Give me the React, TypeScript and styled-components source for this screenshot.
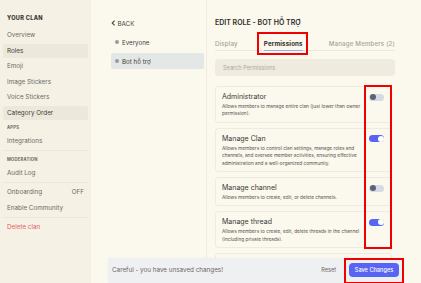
import styled, { createGlobalStyle } from 'styled-components'

const GlobalStyle = createGlobalStyle`
    html, body {
        margin: 0;
        padding: 0;
        background: #fbf8ee;
    }
    body {
        font-family: Inter, "Noto Sans", "Liberation Sans", sans-serif;
        -webkit-font-smoothing: antialiased;
    }
`

type Permission = {
    title: string
    desc: string
    on: boolean
}

const permissions: Permission[] = [
    {
        title: 'Administrator',
        desc: 'Allows members to manage entire clan (just lower than owner permission).',
        on: false,
    },
    {
        title: 'Manage Clan',
        desc: 'Allows members to control clan settings, manage roles and channels, and oversee member activities, ensuring effective administration and a well-organized community.',
        on: true,
    },
    {
        title: 'Manage channel',
        desc: 'Allows members to create, edit, or delete channels.',
        on: false,
    },
    {
        title: 'Manage thread',
        desc: 'Allows members to create, edit, delete threads in the channel (including private threads).',
        on: true,
    },
]

function App() {
    return (
        <>
            <GlobalStyle />
            <Page>
                <Sidebar>
                    <SectionLabel>YOUR CLAN</SectionLabel>
                    <NavItem>Overview</NavItem>
                    <NavItem active>Roles</NavItem>
                    <NavItem>Emoji</NavItem>
                    <NavItem>Image Stickers</NavItem>
                    <NavItem>Voice Stickers</NavItem>
                    <NavItem active>Category Order</NavItem>
                    <SmallLabel>APPS</SmallLabel>
                    <NavItem>Integrations</NavItem>
                    <Divider />
                    <SmallLabel>MODERATION</SmallLabel>
                    <NavItem>Audit Log</NavItem>
                    <Divider />
                    <NavItem>
                        Onboarding
                        <NavStatus>OFF</NavStatus>
                    </NavItem>
                    <NavItem>Enable Community</NavItem>
                    <Divider />
                    <NavItem danger>Delete clan</NavItem>
                </Sidebar>

                <RoleColumn>
                    <BackLink>
                        <svg width="5" height="6" viewBox="0 0 5 6">
                            <path d="M3.6 0.6 L1.2 3 L3.6 5.4" fill="none" stroke="#4a4743" strokeWidth="1.1" />
                        </svg>
                        BACK
                    </BackLink>
                    <RoleList>
                        <RoleItem>
                            <RoleDot />
                            Everyone
                        </RoleItem>
                        <RoleItem active>
                            <RoleDot />
                            Bot hỗ trợ
                        </RoleItem>
                    </RoleList>
                </RoleColumn>

                <EditColumn>
                    <EditTitle>EDIT ROLE - BOT HỖ TRỢ</EditTitle>
                    <TabBar>
                        <Tab>Display</Tab>
                        <Tab active marked>Permissions</Tab>
                        <Tab>Manage Members (2)</Tab>
                    </TabBar>
                    <SearchBox>Search Permissions</SearchBox>
                    <CardList>
                        <ToggleMark />
                        {permissions.map((p) => (
                            <PermissionCard key={p.title}>
                                <CardText>
                                    <CardTitle>{p.title}</CardTitle>
                                    <CardDesc>{p.desc}</CardDesc>
                                </CardText>
                                <Toggle on={p.on}>
                                    <Knob on={p.on} />
                                </Toggle>
                            </PermissionCard>
                        ))}
                        {/* next card, scrolled under the save bar */}
                        <PermissionCard />
                    </CardList>
                </EditColumn>

                <SaveBar>
                    <SaveNotice>Careful - you have unsaved changes!</SaveNotice>
                    <ResetButton>Reset</ResetButton>
                    <SaveButton>Save Changes</SaveButton>
                </SaveBar>
            </Page>
        </>
    )
}

const Page = styled.div`
    position: relative;
    display: grid;
    grid-template-columns: 91px 115px 1fr;
    width: 421px;
    height: 283px;
    overflow: hidden;
    background: #fbf8ee;
`
const Sidebar = styled.div`
    display: flex;
    flex-direction: column;
    row-gap: 1.5px;
    padding: 13px 3px 0 3px;
    background: #f5f1e5;
`
const SectionLabel = styled.div`
    height: 10px;
    line-height: 10px;
    margin-bottom: 3.5px;
    padding-left: 4px;
    font-size: 5.6px;
    font-weight: 800;
    letter-spacing: 0.3px;
    color: #3a3733;
`
const SmallLabel = styled.div`
    height: 8px;
    line-height: 8px;
    margin-top: 3px;
    padding-left: 4px;
    font-size: 4.2px;
    font-weight: 700;
    letter-spacing: 0.2px;
    color: #6b6760;
`
const NavItem = styled.div<{ active?: boolean; danger?: boolean }>`
    display: flex;
    justify-content: space-between;
    align-items: center;
    height: 14px;
    padding: 0 4px;
    border-radius: 2px;
    font-size: 6.3px;
    color: ${(p) => (p.danger ? '#e8605e' : p.active ? '#3f3c37' : '#6d6a64')};
    background: ${(p) => (p.active ? '#ece8dc' : 'transparent')};
`
const NavStatus = styled.span`
    color: #6d6a64;
`
const Divider = styled.div`
    height: 1px;
    margin: 0.5px 0 1px;
    background: #ebe7db;
`
const RoleColumn = styled.div`
    display: flex;
    flex-direction: column;
    padding: 18px 2px 0 20px;
`
const BackLink = styled.div`
    display: flex;
    align-items: center;
    column-gap: 1.5px;
    height: 10px;
    font-size: 6.2px;
    color: #4a4743;
`
const RoleList = styled.div`
    display: flex;
    flex-direction: column;
    row-gap: 3px;
    margin-top: 6px;
`
const RoleItem = styled.div<{ active?: boolean }>`
    display: flex;
    align-items: center;
    column-gap: 3px;
    height: 16px;
    padding-left: 4px;
    border-radius: 2px;
    font-size: 6.2px;
    color: #3f3d3a;
    background: ${(p) => (p.active ? '#e3e7e6' : 'transparent')};
`
const RoleDot = styled.span`
    width: 4px;
    height: 4px;
    border-radius: 50%;
    background: #929ca9;
`
const EditColumn = styled.div`
    display: flex;
    flex-direction: column;
    padding: 18px 26px 0 8px;
    border-left: 1px solid #f1ede2;
`
const EditTitle = styled.div`
    height: 10px;
    line-height: 10px;
    font-size: 7px;
    font-weight: 600;
    color: #2f2d2a;
`
const TabBar = styled.div`
    display: flex;
    justify-content: space-between;
    align-items: flex-end;
    height: 14px;
    margin-top: 8px;
    border-bottom: 1px solid #ece8dd;
`
const Tab = styled.div<{ active?: boolean; marked?: boolean }>`
    position: relative;
    padding-bottom: 3px;
    font-size: 6.2px;
    font-weight: ${(p) => (p.active ? 700 : 500)};
    letter-spacing: 0.15px;
    color: ${(p) => (p.active ? '#2f2d2a' : '#a8a49b')};
    border-bottom: 1px solid ${(p) => (p.active ? '#8eb2e6' : 'transparent')};
    margin-bottom: -1px;

    &::after {
        content: '';
        display: ${(p) => (p.marked ? 'block' : 'none')};
        position: absolute;
        left: -7px;
        right: -5px;
        top: -8px;
        bottom: -5px;
        border: 2px solid #f00000;
    }
`
const SearchBox = styled.div`
    display: flex;
    align-items: center;
    height: 17px;
    margin-top: 8px;
    padding-left: 8px;
    border-radius: 4px;
    background: #efebdf;
    font-size: 5.6px;
    color: #aeaaa0;
`
const CardList = styled.div`
    position: relative;
    display: flex;
    flex-direction: column;
    row-gap: 5px;
    margin-top: 10px;
    margin-right: 3px;
`
const ToggleMark = styled.div`
    position: absolute;
    left: 149px;
    top: -1px;
    width: 24px;
    height: 160px;
    border: 2px solid #f00000;
    z-index: 2;
`
const PermissionCard = styled.div`
    box-sizing: border-box;
    display: grid;
    grid-template-columns: 1fr 15px;
    column-gap: 6px;
    min-height: 28px;
    padding: 5px 7px 4px 6px;
    border: 1px solid #efebdf;
    border-radius: 3px;
    background: #fbf8ee;
`
const CardText = styled.div`
    display: flex;
    flex-direction: column;
    row-gap: 2px;
`
const CardTitle = styled.div`
    height: 9px;
    line-height: 9px;
    font-size: 7px;
    font-weight: 400;
    color: #3a3835;
`
const CardDesc = styled.div`
    font-size: 4.75px;
    line-height: 7.4px;
    color: #56534f;
`
const Toggle = styled.div<{ on: boolean }>`
    position: relative;
    width: 15px;
    height: 7px;
    margin-top: 1.5px;
    border-radius: 4px;
    background: ${(p) => (p.on ? '#5865f2' : '#d6dae2')};
`
const Knob = styled.div<{ on: boolean }>`
    position: absolute;
    top: 0.5px;
    left: ${(p) => (p.on ? '8.5px' : '0.5px')};
    width: 6px;
    height: 6px;
    border-radius: 50%;
    background: ${(p) => (p.on ? '#ffffff' : '#5a6479')};
`
const SaveBar = styled.div`
    position: absolute;
    left: 108px;
    top: 258px;
    width: 294px;
    height: 25px;
    display: flex;
    align-items: center;
    padding: 0 3px 2px 4px;
    box-sizing: border-box;
    border-radius: 2px;
    background: #eff0f1;
    box-shadow: 0 0 2px rgba(0, 0, 0, 0.06);
    z-index: 3;
`
const SaveNotice = styled.div`
    flex: 1;
    font-size: 6.3px;
    color: #6a6864;
`
const ResetButton = styled.div`
    margin-right: 13px;
    font-size: 5.6px;
    color: #6a6864;
`
const SaveButton = styled.div`
    position: relative;
    display: flex;
    align-items: center;
    justify-content: center;
    width: 50px;
    height: 14px;
    border-radius: 4px;
    background: #5865f2;
    color: #ffffff;
    font-size: 5.6px;
    font-weight: 500;

    &::after {
        content: '';
        position: absolute;
        left: -5px;
        right: -5px;
        top: -5px;
        bottom: -7px;
        border: 2px solid #f00000;
    }
`

export default App
